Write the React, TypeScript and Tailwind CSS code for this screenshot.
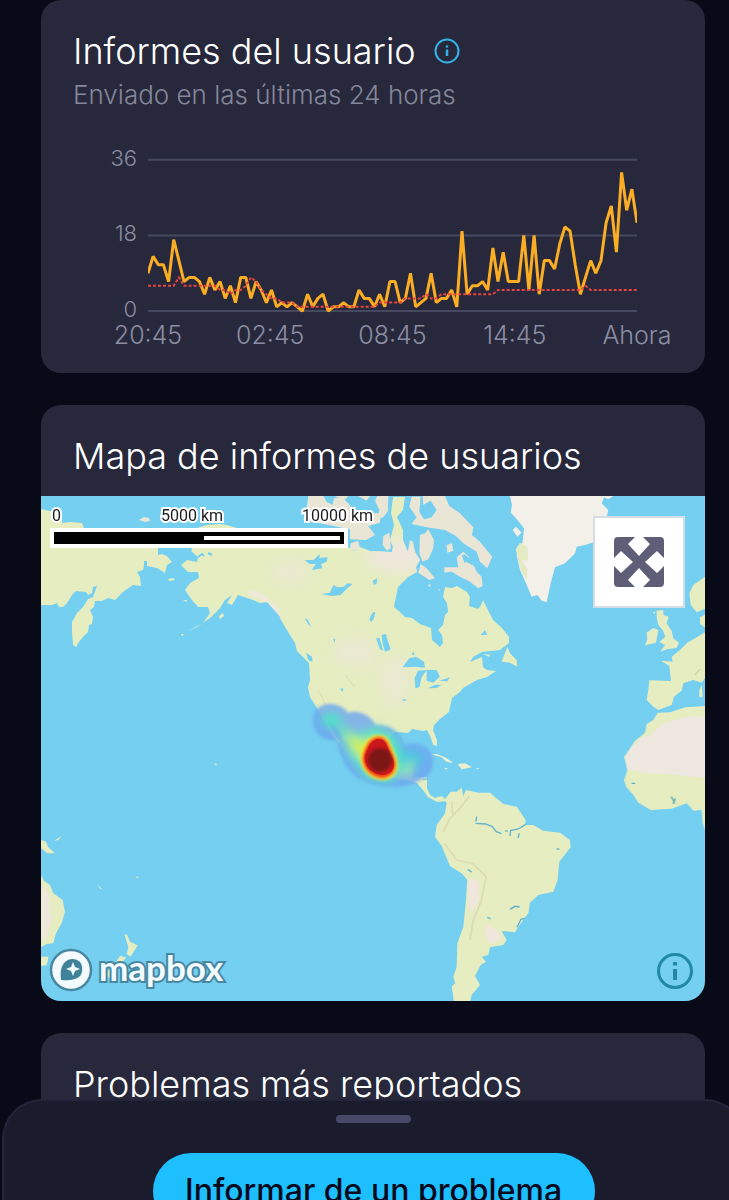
import type { ReactNode } from "react"

const reports = [
  9, 13, 11, 11, 7, 17, 12, 7, 8, 8, 7, 4, 8, 5, 7, 3, 6, 2, 8, 8, 3, 7, 5, 2,
  5, 1, 2, 1, 2, 1, 0, 4, 1, 3, 4, 0, 1, 1, 2, 1, 1, 5, 3, 3, 1, 4, 1, 7,
  7, 2, 3, 9, 1, 2, 3, 9, 2, 3, 3, 5, 1, 19, 4, 6, 6, 7, 5, 15, 7, 14, 7, 7,
  7, 18, 5, 18, 4, 12, 12, 10, 16, 20, 19, 11, 4, 8, 12, 9, 12, 21, 25, 14, 33, 24, 29, 21,
]

const baseline = [
  6, 6, 6, 6, 6, 6, 8, 6, 6, 6, 6, 6, 6, 6, 5, 5, 4, 5, 5, 6, 8, 7, 5, 4,
  3, 3, 2, 2, 2, 1, 1, 1, 1, 1, 1, 1, 1, 1, 1, 1, 1, 1, 1, 1, 1, 2, 2, 2,
  2, 2, 3, 3, 3, 3, 4, 3, 3, 4, 4, 4, 4, 4, 4, 4, 4, 4, 4, 4, 5, 5, 5, 5,
  5, 5, 5, 5, 5, 5, 5, 5, 5, 5, 5, 5, 5, 6, 5, 5, 5, 5, 5, 5, 5, 5, 5, 5,
]

const CHART = { left: 107, right: 596, zero: 181, unit: 4.2 }

const toPoints = (values: number[]) =>
  values
    .map((v, i) => {
      const x = CHART.left + ((CHART.right - CHART.left) * i) / (values.length - 1)
      return `${x.toFixed(1)},${(CHART.zero - v * CHART.unit).toFixed(1)}`
    })
    .join(" ")

const hours = ["20:45", "02:45", "08:45", "14:45", "Ahora"]

function Card({ children }: { children: ReactNode }) {
  return (
    <section className="overflow-hidden rounded-[20px] bg-[#27283b]">{children}</section>
  )
}

function CardTitle({ children }: { children: ReactNode }) {
  return <h2 className="text-[36px] leading-[44px] font-light text-white">{children}</h2>
}

function ReportsChart() {
  return (
    <svg viewBox="0 0 664 243" className="block w-full" role="img" aria-label="Informes en las últimas 24 horas">
      {[0, 18, 36].map((v) => {
        const y = CHART.zero - v * CHART.unit
        return (
          <g key={v}>
            <line x1={CHART.left} x2={CHART.right} y1={y} y2={y} stroke="#464860" strokeWidth="2" />
            <text x="96" y={y + 6} textAnchor="end" fontSize="22" fontWeight="300" fill="#8b8da3">
              {v}
            </text>
          </g>
        )
      })}
      <svg x={CHART.left} y="0" width={CHART.right - CHART.left} height="243" viewBox="107 0 489 243">
        <polyline points={toPoints(reports)} fill="none" stroke="#fbae24" strokeWidth="3" strokeLinejoin="bevel" />
        <polyline points={toPoints(baseline)} fill="none" stroke="#e8433f" strokeWidth="2" strokeDasharray="3 2" />
      </svg>
      {hours.map((label, i) => (
        <text
          key={label}
          x={CHART.left + (i * (CHART.right - CHART.left)) / 4}
          y="214"
          textAnchor="middle"
          fontSize="25"
          fontWeight="300"
          fill="#8b8da3"
        >
          {label}
        </text>
      ))}
    </svg>
  )
}

const northAmerica =
  "M197 528L207 525 220 524 227 525 240 529 350 548 355 551 360 547 370 551 392 552 393 547 390 540 394 525 391 513 393 497 405 497 403 510 397 517 403 530 403 540 408 552 410 540 413 542 415 552 420 560 416 567 417 572 408 577 403 582 398 587 396 597 394 607 400 612 405 617 412 618 420 624 431 628 432 640 440 647 443 643 442 635 438 630 443 625 445 615 448 612 447 603 443 597 445 587 452 588 457 586 467 592 470 597 469 606 478 609 481 605 483 600 489 612 493 620 502 628 509 637 509 643 500 650 482 652 473 657 470 662 482 657 483 667 487 670 496 671 487 677 477 680 463 688 460 692 452 698 450 707 449 712 440 719 434 725 433 730 437 740 437 746 433 745 431 738 427 730 423 731 412 729 408 733 395 732 388 740 388 757 395 768 405 770 408 760 417 759 414 770 413 777 427 777 427 788 430 795 435 798 442 796 447 801 437 802 428 797 423 790 417 783 407 780 393 778 380 775 363 768 358 760 347 743 333 723 329 720 332 730 340 742 350 753 344 748 332 735 322 717 317 708 310 697 308 687 310 680 309 663 297 651 295 643 285 627 277 613 267 602 260 603 253 600 238 595 232 605 227 603 232 595 225 600 220 608 210 618 197 627 188 631 203 623 210 613 208 607 198 607 192 600 185 590 190 583 199 578 198 572 188 572 181 565 187 560 197 562 198 557 191 551 197 540Z"

const siberia =
  "M41 509L50 511 62 514 62 523 70 522 82 523 84 528 100 535 158 545 158 555 162 554 167 556 172 562 167 565 165 573 157 568 147 566 147 561 144 561 144 566 143 570 137 572 140 577 141 586 133 585 123 592 115 600 108 598 102 601 95 601 94 607 90 610 93 617 92 624 89 625 88 632 83 637 79 642 76 647 73 645 72 632 72 622 77 613 83 607 88 599 93 597 97 586 93 587 92 593 88 595 86 592 76 591 72 595 67 603 63 607 59 607 57 603 52 605 41 605Z"

function WorldMap() {
  return (
    <svg viewBox="41 496 664 505" className="block w-full" role="img" aria-label="Mapa de calor de los informes">
      <defs>
        <filter id="soft" x="-30%" y="-30%" width="160%" height="160%">
          <feGaussianBlur stdDeviation="3" />
        </filter>
        <filter id="glow" x="-40%" y="-40%" width="180%" height="180%">
          <feGaussianBlur stdDeviation="5" />
        </filter>
        <filter id="edge" x="-30%" y="-30%" width="160%" height="160%">
          <feGaussianBlur stdDeviation="1.5" />
        </filter>
        <filter id="terrain" x="-50%" y="-50%" width="200%" height="200%">
          <feGaussianBlur stdDeviation="7" />
        </filter>
        <clipPath id="na">
          <path d={northAmerica} />
        </clipPath>
      </defs>
      <rect x="41" y="496" width="664" height="505" fill="#74cff0" />

      <g fill="#e5edc1">
        <path d={siberia} />
        <path d={northAmerica} />
        <path d="M168 579L173 578 175 580 169 581ZM183 600L187 600 186 602ZM219 616L223 613 224 616 220 619ZM214 763L217 764 216 766ZM181 634L184 634 182 636Z" />
      </g>
      <g clipPath="url(#na)">
        <g fill="#efe6dd" filter="url(#terrain)">
          <ellipse cx="400" cy="556" rx="34" ry="16" />
          <ellipse cx="290" cy="572" rx="18" ry="12" opacity=".6" />
          <ellipse cx="355" cy="652" rx="22" ry="14" opacity=".6" />
          <ellipse cx="395" cy="680" rx="14" ry="26" opacity=".6" />
        </g>
        <path d="M248 592l14 5 9 8 8 9" stroke="#f0e8df" strokeWidth="5" fill="none" filter="url(#edge)" />
        <path d="M318 690l12 22 M345 675l10 12" stroke="#dcd9b3" strokeWidth="1" fill="none" />
      </g>

      {/* Canadian archipelago */}
      <g transform="translate(260 480) scale(.3333)" fill="#eae6d6">
        <path d="M145 48L190 48 200 65 218 75 222 55 245 52 265 70 285 98 362 100 360 128 325 138 345 165 318 180 270 178 270 148 130 120 140 85ZM225 48L265 48 252 62ZM295 48L330 48 320 62ZM345 62L352 48 385 48 384 92 370 112 352 118 358 90ZM370 168L388 158 393 205 380 212 368 195Z" />
        <path d="M448 80L455 50 482 50 478 95 492 118 515 112 530 90 512 62 490 75 488 48 555 48 568 78 600 100 640 142 636 165 660 185 676 205 697 230 682 265 660 245 650 215 610 190 588 168 555 150 500 142 455 132 470 112Z" />
        <path d="M480 165L495 160 505 148 522 180 520 205 505 238 488 245 478 220ZM482 252L500 265 525 295 508 300 475 278ZM553 262L595 262 590 232 610 215 628 232 618 245 642 258 650 275 665 290 668 318 655 325 630 305 600 290 575 275 553 278ZM560 195L576 190 580 212 562 218ZM272 190L295 182 300 205 285 212 270 205ZM503 315L512 312 510 322ZM535 328L540 328 538 333Z" />
      </g>
      <path d="M139 520l5-3 5 1 1 3-5 1z" fill="#eae6d6" />

      {/* lakes and inlets */}
      <g transform="translate(260 480) scale(.3333)" fill="#74cff0">
        <path d="M135 240L160 240 180 222 178 234 203 232 200 245 183 252 187 265 155 270 168 252 148 252ZM183 342L210 338 220 315 232 322 252 320 262 310 278 312 262 325 242 345 215 348ZM338 302L352 295 350 310 342 316ZM328 418L337 398 346 396 342 415 334 426ZM365 465L378 462 384 485 392 508 376 516 368 492ZM348 475L358 474 370 512 360 508ZM428 562L448 535 468 530 492 545 495 563 465 560ZM466 625L464 595 474 572 500 570 485 592 478 622ZM500 570L530 570 540 590 520 608 500 602ZM503 625L525 615 545 614 530 624ZM538 602L570 592 562 604ZM135 415L142 418 154 440 144 432ZM138 518L156 530 158 545 145 540ZM240 626L250 625 248 636ZM455 525L460 514 464 524ZM662 465L675 450 682 464ZM428 658L438 658 438 662 428 662ZM35 398L42 394 60 410 54 428 66 440 78 450 90 475 75 478 65 455 48 420ZM606 228L612 222 628 235 614 250ZM220 478L226 476 224 488Z" />
      </g>
      <path d="M198 557l4-3 2 2M208 553l4 2" stroke="#74cff0" strokeWidth="2" fill="none" />

      {/* Greenland and western Europe */}
      <g transform="translate(480 480) scale(.3333)">
        <path d="M90 48L375 48 365 70 385 90 380 112 345 185 315 195 290 200 285 220 255 250 225 262 212 310 200 367 185 362 172 345 155 350 138 310 120 270 110 225 128 185 132 145 108 115 92 98 96 75ZM98 150L108 140 125 158 112 170ZM365 48L400 48 385 58Z" fill="#f3f0ea" />
        <path d="M107 208L120 188 142 200 145 242 126 240 142 268 140 300 122 272Z" fill="#e3eac4" />
        <path d="M65 545L82 500 90 520 110 540 112 560 90 548ZM10 522L32 524 26 530ZM628 340L640 315 678 288 678 385 650 397 632 375ZM660 412L678 402 678 445 660 432ZM530 392L550 390 550 405 566 410 560 430 575 452 580 475 597 488 590 504 560 508 540 516 555 495 538 486 556 470 548 450 535 435 530 412ZM500 458L520 444 535 450 528 488 495 496 502 478ZM678 455L650 472 622 488 600 510 575 530 578 545 543 542 568 558 573 603 508 601 505 630 500 660 520 680 535 690 575 675 582 650 605 632 610 610 640 600 665 608 678 590ZM658 630L665 615 668 650 658 652ZM518 396L526 396 524 402Z" fill="#e5edc1" />
        <path d="M645 585L660 568" stroke="#d3d2b4" strokeWidth="4" />
      </g>

      {/* Africa */}
      <g transform="translate(590 620) scale(.3333)">
        <path d="M348 258L285 262 240 277 203 278 190 300 170 312 165 338 135 362 103 410 112 450 103 480 108 500 130 525 145 548 182 570 245 566 290 550 310 572 335 570 338 610 348 638Z" fill="#e5edc1" />
        <path d="M348 288L290 290 215 312 185 342 150 356 122 385 105 412 113 450 165 458 230 462 348 474Z" fill="#efe8e1" />
        <path d="M125 490h10M243 530l8 12v10M255 535l-4 17" stroke="#5aa9b5" strokeWidth="4" fill="none" />
      </g>

      {/* South America and the Caribbean */}
      <g transform="translate(410 740) scale(.3333)">
        <path d="M80 170L105 178 122 155 140 155 155 143 160 168 168 150 205 158 240 158 280 192 320 200 347 240 345 255 370 255 400 272 450 278 480 300 482 322 448 365 443 420 430 455 385 465 360 488 355 520 325 560 315 577 275 573 290 600 280 615 240 622 235 645 215 650 228 665 212 675 195 708 210 735 185 765 180 786 132 786 125 740 135 730 130 710 140 680 142 610 160 560 168 480 172 420 155 400 120 378 95 318 75 290 80 255 105 220 110 190 98 172 82 182Z" fill="#e5edc1" />
        <path d="M176 415L205 420 207 480 185 520 175 490ZM228 550L265 575 275 600 240 610 228 590Z" fill="#f0e6de" filter="url(#soft)" />
        <path d="M178 168L150 205 120 235 100 275M125 185L128 225M103 310L140 360 190 372 228 410 215 480 190 540 180 600" stroke="#dcdbb4" strokeWidth="5" fill="none" />
        <path d="M200 230l-2 14M197 250l30 2 20 8 12 15 15 6M285 272l8 2M300 272l25-5 22-14M302 270l-2 18M328 280l-4 14M300 508l15-9 14 2M345 535l-12 3-12 24M232 532l10 4M440 327h8M173 388l12 8" stroke="#5cb4cf" strokeWidth="4" fill="none" />
        <path d="M62 42L80 42 105 52 130 68 110 66 95 52ZM143 72L165 70 186 82 155 88ZM104 84L115 85 105 89ZM200 84L210 86 200 88Z" fill="#eef0cd" />
        <path d="M40 118l12-1" stroke="#5cb4cf" strokeWidth="3" />
      </g>

      {/* Oceania */}
      <g transform="translate(30 820) scale(.3333)" fill="#e5edc1">
        <path d="M33 165L42 182 60 195 70 220 98 240 105 275 95 310 78 340 70 370 50 372 33 382ZM33 410L56 410 50 435 33 438ZM33 60L48 65 55 82 75 100 52 100 33 85ZM72 62L95 48 85 60ZM202 193L216 208 210 206ZM316 170L326 170 324 175ZM283 342L292 345 300 365 323 376 302 410 290 402 295 382ZM270 408L288 412 270 440 240 475 225 465 255 430Z" />
        <path d="M33 195L55 215 65 300 50 350 33 365Z" fill="#f0e8dc" filter="url(#soft)" />
      </g>

      {/* heat layer */}
      <g fill="#6ea6f2" filter="url(#edge)" opacity=".8">
        <path d="M313 721C312 701 339 699 348 713C358 709 370 715 376 725C390 724 402 733 404 745C418 740 433 748 433 762C433 775 424 779 416 782C404 789 382 788 368 783C351 777 341 763 337 740C325 742 314 735 313 721Z" />
      </g>
      <g filter="url(#glow)">
        <path d="M336 720L356 734 376 727 394 735 402 752 401 770 390 783 366 778 348 754Z" fill="#58e7c0" />
        <ellipse cx="331" cy="720" rx="10" ry="7" fill="#4ee3c4" />
        <ellipse cx="411" cy="759" rx="12" ry="9" fill="#4cc6e0" />
        <path d="M395 772l20-14-4 18z" fill="#8aeab0" />
        <path d="M344 732L362 741 376 738 372 766 354 752Z" fill="#d5ee50" />
      </g>
      <path d="M379 735C390 735 391 746 395 754C401 766 397 780 382 780C367 779 359 766 361 754C364 744 369 735 379 735Z" fill="#ffe92e" filter="url(#edge)" />
      <path d="M379 737C388 737 389 747 393 755C399 766 394 778 382 778C369 777 361 765 363 755C366 745 370 737 379 737Z" fill="#f04518" filter="url(#edge)" />
      <path d="M379 739C387 739 387 748 392 757C397 767 392 775 382 775C371 774 363 765 365 755C368 747 371 739 379 739Z" fill="#cb171c" />
      <ellipse cx="380" cy="760" rx="12" ry="12" fill="#7d1219" filter="url(#edge)" />
    </svg>
  )
}

function MapScale() {
  return (
    <div className="absolute top-2 left-[9px] w-[298px] font-[Roboto,sans-serif] text-base leading-6 text-[#1c1c1c]">
      <div className="flex whitespace-nowrap [-webkit-text-stroke:4px_white] [paint-order:stroke_fill]">
        <span className="w-[111px] shrink-0 pl-[2px]">0</span>
        <span className="w-[141px] shrink-0">5000 km</span>
        <span className="shrink-0">10000 km</span>
      </div>
      <div className="border-4 border-white bg-black py-1 pr-1 pl-[150px]">
        <div className="h-1 bg-white" />
      </div>
    </div>
  )
}

function MapboxLogo() {
  return (
    <a href="#mapbox" className="absolute bottom-2 left-2 flex items-center gap-[6px]">
      <svg viewBox="0 0 44 44" className="size-[44px]" aria-hidden="true">
        <circle cx="22" cy="22" r="20" fill="#f4fbfe" stroke="#4787a0" strokeWidth="2.5" />
        <path d="M12 32C11 24 12 18 16 14C20 10 27 10 31 14C34 18 34 24 31 28C27 32 20 33 12 32Z" fill="#40829a" />
        <path d="M24 14l2 5 5 2-5 2-2 5-2-5-5-2 5-2z" fill="#f4fbfe" />
      </svg>
      <span className="pb-[6px] font-[Lato,sans-serif] text-[35px] leading-10 font-bold text-[#f4fbfe] [-webkit-text-stroke:4px_#4787a0] [paint-order:stroke_fill]">
        mapbox
      </span>
    </a>
  )
}

export default function App() {
  return (
    <div className="relative h-screen overflow-hidden bg-[#080a18] font-[Inter,sans-serif]">
      <main className="flex flex-col gap-8 pr-6 pl-[41px]">
        <Card>
          <div className="h-[130px] px-8 pt-[29px]">
            <div className="flex items-center gap-[18px]">
              <CardTitle>Informes del usuario</CardTitle>
              <button type="button" aria-label="Información">
                <svg viewBox="0 0 26 26" className="size-[26px]" fill="none" stroke="#34b3ea">
                  <circle cx="13" cy="13" r="11.5" strokeWidth="2" />
                  <path d="M13 11.5V18M13 7.5V9.5" strokeWidth="2.5" />
                </svg>
              </button>
            </div>
            <p className="mt-1 text-[26px] leading-9 font-light text-[#85879c]">Enviado en las últimas 24 horas</p>
          </div>
          <ReportsChart />
        </Card>

        <Card>
          <div className="px-8 pt-[29px] pb-[18px]">
            <CardTitle>Mapa de informes de usuarios</CardTitle>
          </div>
          <div className="relative">
            <WorldMap />
            <MapScale />
            <button
              type="button"
              aria-label="Ampliar mapa"
              className="absolute top-5 right-5 flex size-[92px] items-center justify-center border-2 border-[#d5dde4] bg-white"
            >
              <svg viewBox="0 0 50 50" className="size-[50px]" fill="#5e5e78">
                <path d="M4 0H21L14 7 25 19 36 7 29 0H46Q50 0 50 4V21L43 14 31 25 43 36 50 29V46Q50 50 46 50H29L36 43 25 31 14 43 21 50H4Q0 50 0 46V29L7 36 19 25 7 14 0 21V4Q0 0 4 0Z" />
              </svg>
            </button>
            <MapboxLogo />
            <button type="button" aria-label="Atribución del mapa" className="absolute right-3 bottom-3">
              <svg viewBox="0 0 36 36" className="size-9" fill="none" stroke="#2288a8">
                <circle cx="18" cy="18" r="16.5" strokeWidth="3" />
                <path d="M18 16V27M18 9V12.500" strokeWidth="4" />
              </svg>
            </button>
          </div>
        </Card>

        <Card>
          <div className="px-8 pt-[29px] pb-20">
            <CardTitle>Problemas más reportados</CardTitle>
          </div>
        </Card>
      </main>

      <div className="fixed right-[-16px] bottom-0 left-[2px] flex h-[101px] flex-col items-center overflow-hidden rounded-t-[40px] border-2 border-b-0 border-[#24253a] bg-[#1a1b2d]">
        <div className="mt-[14px] h-2 w-[75px] shrink-0 rounded-full bg-[#484966]" />
        <button
          type="button"
          className="mt-[30px] h-[76px] w-[442px] shrink-0 rounded-full bg-[#1dbfff] text-[32px] font-medium text-[#06091c]"
        >
          Informar de un problema
        </button>
      </div>
    </div>
  )
}
